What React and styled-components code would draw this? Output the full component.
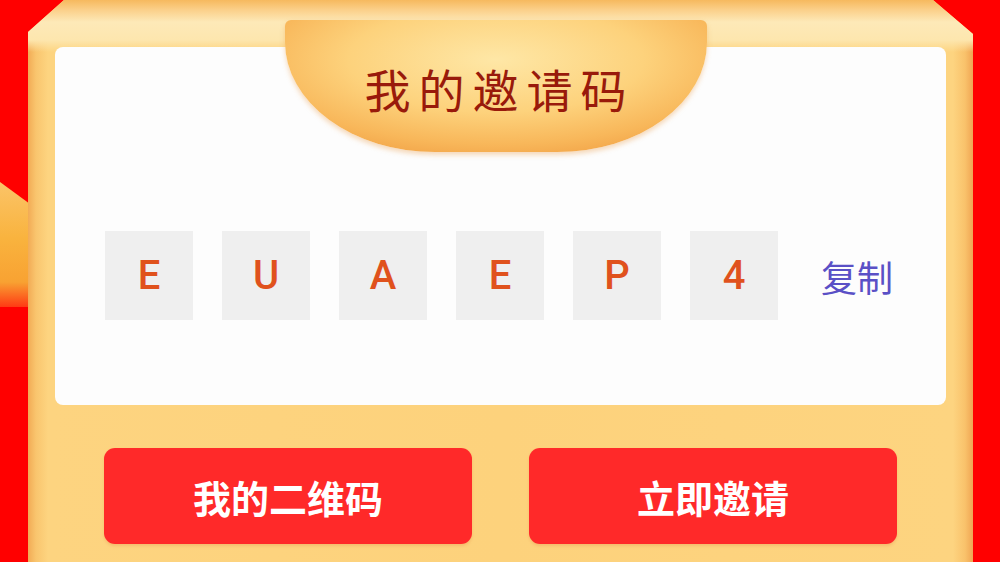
import React from 'react'
import styled, { createGlobalStyle } from 'styled-components'

const GlobalStyle = createGlobalStyle`
    html, body {
        margin: 0;
        padding: 0;
        background: #ff0000;
        overflow: hidden;
    }
`;

const Page = styled.div`
    position: relative;
    width: 1000px;
    height: 562px;
    overflow: hidden;
    box-sizing: border-box;
    padding: 0 27px 0 28px;
    background: #ff0000;
    font-family: "Noto Sans CJK SC", "Noto Sans", sans-serif;
`;

// golden ribbon peeking out behind the frame on the left
const SideRibbon = styled.div`
    position: absolute;
    left: 0;
    top: 182px;
    width: 30px;
    height: 125px;
    clip-path: polygon(0 0, 100% 22px, 100% 100%, 0 100%);
    background: linear-gradient(to bottom, #fbc468 0%, #f9b33e 45%, #f8a232 80%, #ff3a14 100%);
`;

const Frame = styled.div`
    position: relative;
    height: 640px;
    box-sizing: border-box;
    padding: 47px 27px 0 27px;
    clip-path: polygon(36px 0, calc(100% - 40px) 0, 100% 34px, 100% 100%, 0 100%, 0 32px);
    background:
        linear-gradient(to bottom, #f6b95e 0px, #fbd08a 10px, #fde9b8 22px, #fde6ae 40px, rgba(253, 214, 128, 0) 52px) top / 100% 60px no-repeat,
        linear-gradient(to right, #f2ab55 0px, #f9c56e 8px, #fdd480 20px, #fdd27c 50%, #fdd480 calc(100% - 20px), #f9c26b calc(100% - 8px), #f0a553 100%);
`;

const Tab = styled.div`
    position: absolute;
    top: 20px;
    left: 50%;
    transform: translateX(-50%);
    margin-left: -5px;
    width: 422px;
    height: 132px;
    z-index: 2;
    display: flex;
    justify-content: center;
    padding-top: 40px;
    box-sizing: border-box;
    border-radius: 6px 6px 150px 150px / 6px 6px 110px 110px;
    background: radial-gradient(ellipse 70% 80% at 50% 30%, #fee7a6 0%, #fdd27c 50%, #f8b75a 80%, #f1a044 100%);
    box-shadow: 0 3px 5px rgba(232, 150, 60, 0.35);
`;

const Title = styled.div`
    color: #991a0b;
    font-size: 46px;
    line-height: 56px;
    letter-spacing: 8px;
    margin-right: -8px;
    font-weight: 400;
`;

const Panel = styled.div`
    height: 358px;
    box-sizing: border-box;
    background: #fdfdfd;
    border-radius: 8px;
    display: flex;
    align-items: flex-start;
    padding: 184px 0 0 50px;
`;

const CodeRow = styled.div`
    display: flex;
    align-items: center;
    gap: 29px;
`;

const CodeBox = styled.div`
    width: 88px;
    height: 89px;
    background: #efefef;
    display: flex;
    align-items: center;
    justify-content: center;
    color: #e0521d;
    font-family: Roboto, "Liberation Sans", sans-serif;
    font-size: 40px;
    font-weight: 500;
`;

const CopyLink = styled.div`
    margin-left: 14px;
    height: 89px;
    display: flex;
    align-items: center;
    color: #5a50c6;
    font-size: 36px;
    cursor: pointer;
`;

const ButtonRow = styled.div`
    display: flex;
    gap: 57px;
    margin-top: 43px;
    padding: 0 49px;
`;

const ActionButton = styled.div`
    flex: 1;
    height: 96px;
    border-radius: 11px;
    background: #ff2929;
    color: #ffffff;
    font-size: 38px;
    font-weight: 700;
    display: flex;
    align-items: center;
    justify-content: center;
    box-shadow: 0 2px 3px rgba(200, 60, 20, 0.15);
`;

const code = ['E', 'U', 'A', 'E', 'P', '4'];

export default function App() {
    return (
        <Page>
            <GlobalStyle />
            <SideRibbon />
            <Frame>
                <Tab>
                    <Title>我的邀请码</Title>
                </Tab>
                <Panel>
                    <CodeRow>
                        {code.map((c, i) => (
                            <CodeBox key={i}>{c}</CodeBox>
                        ))}
                        <CopyLink>复制</CopyLink>
                    </CodeRow>
                </Panel>
                <ButtonRow>
                    <ActionButton>我的二维码</ActionButton>
                    <ActionButton>立即邀请</ActionButton>
                </ButtonRow>
            </Frame>
        </Page>
    );
}
